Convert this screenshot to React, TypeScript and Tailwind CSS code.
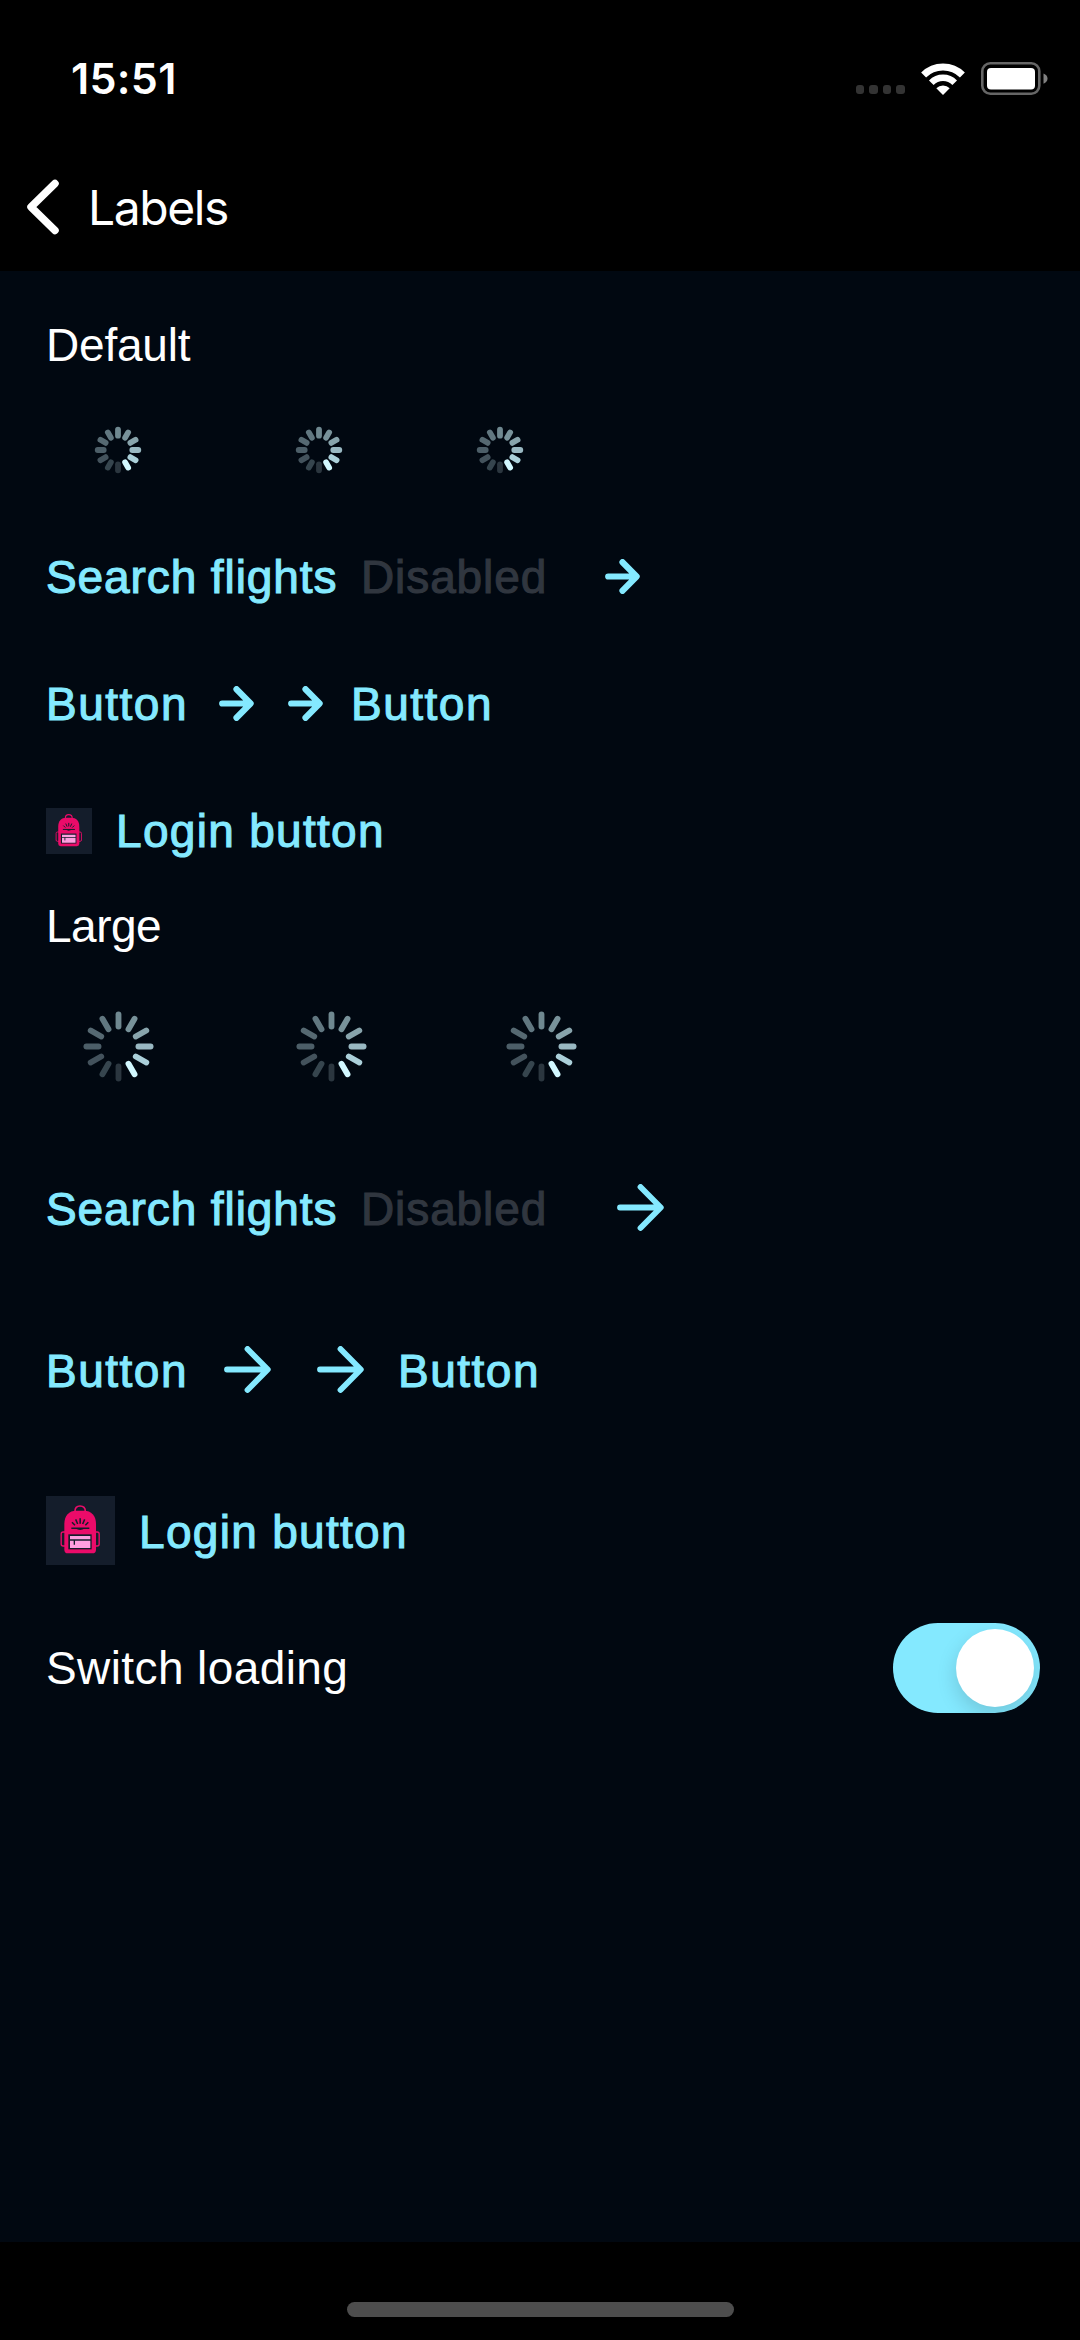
import type { ReactNode } from "react";

const SPOKES = [
  "#6f8890", "#78929a", "#88a4ac", "#99b8c2", "#abd0da", "#d2f8ff",
  "#2b363f", "#36454e", "#43525c", "#4c5e68", "#566972", "#617780",
];

function Spinner({ large = false }: { large?: boolean }) {
  return (
    <svg
      viewBox="-23 -23 46 46"
      className={large ? "size-[69px] shrink-0 overflow-visible" : "size-[46px] shrink-0 overflow-visible"}
    >
      {SPOKES.map((c, i) => (
        <line
          key={i}
          x1="0"
          x2="0"
          y1={large ? -13.3 : -14.3}
          y2={large ? -21.4 : -20.3}
          stroke={c}
          strokeWidth={large ? 3.9 : 5.8}
          strokeLinecap="round"
          transform={`rotate(${i * 30})`}
        />
      ))}
    </svg>
  );
}

function Arrow({ large = false }: { large?: boolean }) {
  return large ? (
    <svg viewBox="0 0 47 47" className="size-[47px] shrink-0" fill="none" stroke="#84e9ff" strokeWidth="5.8" strokeLinecap="round" strokeLinejoin="round">
      <path d="M3 23.5H43.5M23.5 3L43.8 23.5L23.5 44" />
    </svg>
  ) : (
    <svg viewBox="0 0 35 35" className="size-[35px] shrink-0" fill="none" stroke="#84e9ff" strokeWidth="6.2" strokeLinecap="round" strokeLinejoin="round">
      <path d="M3.2 17.5H31M17.5 3.2L31.6 17.5L17.5 31.8" />
    </svg>
  );
}

function Backpack({ large = false }: { large?: boolean }) {
  return (
    <svg viewBox="18 20 207 207" className={large ? "size-[69px] shrink-0 bg-[#141d2b]" : "size-[46px] shrink-0 bg-[#141d2b]"} fill="none">
      <path d="M105 66C105 55 111 50 120 50s16 5 16 16" stroke="#eb0b69" strokeWidth="5" />
      <rect x="63.500" y="128" width="20" height="42" rx="6" stroke="#eb0b69" strokeWidth="4" />
      <rect x="157.500" y="128" width="20" height="42" rx="6" stroke="#eb0b69" strokeWidth="4" />
      <path d="M73 104C73 78 88 64 108 64H133C153 64 168 78 168 104V181Q168 192 157 192H84Q73 192 73 181Z" fill="#eb0b69" />
      <path d="M94 116.500H148M120.500 87V103M107 90L113 104M134 90L128 104M96 99L105 108M145 99L136 108" stroke="#141d2b" strokeWidth="4.500" />
      <path d="M106 117Q120.500 127 135 117Z" fill="#141d2b" />
      <rect x="85" y="135" width="70" height="45" fill="#141d2b" />
      <path d="M90 140H151V150H90ZM90 154H151V176H90Z" fill="#ff9fe0" />
      <path d="M103 152V166" stroke="#141d2b" strokeWidth="4" />
    </svg>
  );
}

function LinkText({ children, disabled = false, className }: { children: ReactNode; disabled?: boolean; className: string }) {
  return (
    <span
      className={`block shrink-0 whitespace-nowrap [-webkit-text-stroke:1.1px_currentColor] ${disabled ? "text-[#30363f]" : "text-[#84e9ff]"} ${className}`}
    >
      {children}
    </span>
  );
}

function Row({ children, large = false }: { children: ReactNode; large?: boolean }) {
  return <div className={large ? "flex h-[161.3px] items-center" : "flex h-[127px] items-center"}>{children}</div>;
}

export default function App() {
  return (
    <div className="flex h-[2340px] w-[1080px] flex-col overflow-hidden bg-black font-['Liberation_Sans',Arial,sans-serif] text-[46px] leading-[56px] text-white">
      <header className="flex h-[271px] shrink-0 flex-col font-['Inter',sans-serif]">
        <div className="flex h-[157px] items-center justify-between pr-8 pl-[71px]">
          <span className="text-[43px] leading-none font-semibold tracking-[0.3px]">15:51</span>
          <div className="flex items-center">
            <div className="mt-[22px] mr-4 flex gap-[5px]">
              {[0, 1, 2, 3].map((i) => (
                <span key={i} className="size-[8.6px] rounded-[3px] bg-[#333333]" />
              ))}
            </div>
            <svg viewBox="0 0 44 32" className="mr-4 h-8 w-11" fill="none">
              <path d="M2.600 11.900A27.500 27.500 0 0 1 41.400 11.900" stroke="#fff" strokeWidth="7" />
              <path d="M10.300 19.700A16.500 16.500 0 0 1 33.700 19.700" stroke="#fff" strokeWidth="6.500" />
              <path d="M15.300 25.300A9.500 9.500 0 0 1 28.700 25.300L22 32Z" fill="#fff" />
            </svg>
            <svg viewBox="0 0 67 33" className="h-[33px] w-[67px]">
              <rect x="1.300" y="1.300" width="57" height="30.400" rx="8" fill="none" stroke="#666" strokeWidth="2.600" />
              <rect x="6" y="6" width="48" height="21.500" rx="4" fill="#fff" />
              <path d="M62.500 11.500Q66.500 13 66.500 16.500T62.500 21.800Z" fill="#808080" />
            </svg>
          </div>
        </div>
        <div className="flex h-[100px] items-center pl-[26px]">
          <svg viewBox="0 0 34 56" className="h-14 w-[34px]" fill="none" stroke="#fff" strokeWidth="7.500" strokeLinecap="round" strokeLinejoin="round">
            <path d="M29 4.500L5 28L29 51.500" />
          </svg>
          <h1 className="ml-[28px] pt-[2px] text-[48px] leading-none font-normal tracking-[-1.4px]">Labels</h1>
        </div>
      </header>

      <main className="flex h-[1971px] shrink-0 flex-col bg-[#010811] px-[46px]">
        <h2 className="h-[115px] pt-[46px] tracking-[-0.2px]">Default</h2>
        <Row>
          <div className="w-[49px]" />
          <Spinner />
          <div className="w-[155px]" />
          <Spinner />
          <div className="w-[135px]" />
          <Spinner />
        </Row>
        <Row>
          <LinkText className="w-[315px] tracking-[0.9px]">Search flights</LinkText>
          <LinkText disabled className="w-[244px] tracking-[0.9px]">Disabled</LinkText>
          <Arrow />
        </Row>
        <Row>
          <LinkText className="w-[173px] tracking-[1.5px]">Button</LinkText>
          <Arrow />
          <div className="w-[34px]" />
          <Arrow />
          <LinkText className="ml-[28px] tracking-[1.5px]">Button</LinkText>
        </Row>
        <Row>
          <Backpack />
          <LinkText className="ml-6 tracking-[1.3px]">Login button</LinkText>
        </Row>
        <h2 className="h-[72px] pt-[4px] tracking-[-0.5px]">Large</h2>
        <Row large>
          <div className="w-[38px]" />
          <Spinner large />
          <div className="w-[144px]" />
          <Spinner large />
          <div className="w-[141px]" />
          <Spinner large />
        </Row>
        <Row large>
          <LinkText className="w-[315px] pt-[3px] tracking-[0.9px]">Search flights</LinkText>
          <LinkText disabled className="w-[256px] pt-[3px] tracking-[0.9px]">Disabled</LinkText>
          <Arrow large />
        </Row>
        <Row large>
          <LinkText className="w-[178px] pt-[3px] tracking-[1.5px]">Button</LinkText>
          <Arrow large />
          <div className="w-[46px]" />
          <Arrow large />
          <LinkText className="ml-[34px] pt-[3px] tracking-[1.5px]">Button</LinkText>
        </Row>
        <Row large>
          <Backpack large />
          <LinkText className="ml-6 pt-[3px] tracking-[1.3px]">Login button</LinkText>
        </Row>
        <div className="-mr-[6px] flex h-[113px] items-center justify-between">
          <span className="pt-px tracking-[0.4px]">Switch loading</span>
          <button
            type="button"
            role="switch"
            aria-checked="true"
            aria-label="Switch loading"
            className="flex h-[90px] w-[147px] items-center justify-end overflow-hidden rounded-full bg-[#84e9ff] pr-[6px]"
          >
            <span className="size-[78px] rounded-full bg-white shadow-[0_8px_20px_rgba(0,0,0,0.15)]" />
          </button>
        </div>
      </main>

      <footer className="flex h-[98px] shrink-0 items-start justify-center pt-[60px]">
        <div className="h-[15px] w-[387px] rounded-full bg-[#4d4d4d]" />
      </footer>
    </div>
  );
}
